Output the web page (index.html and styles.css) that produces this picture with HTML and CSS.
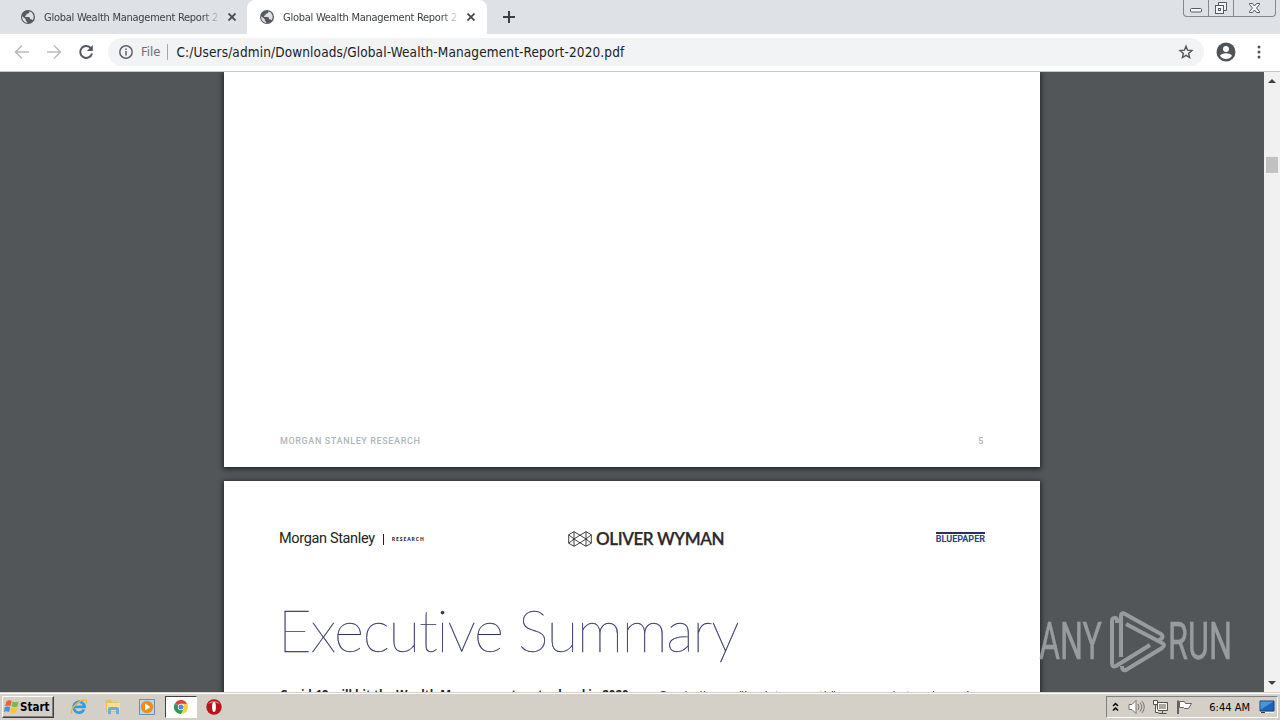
FILE: index.html
```html
<!DOCTYPE html>
<html lang="en">
<head>
  <meta charset="UTF-8">
  <title>Global Wealth Management Report 2020</title>
  <link rel="stylesheet" href="styles.css">
</head>
<body>
  <svg width="0" height="0" class="defs">
    <symbol id="globe" viewBox="0 0 14 14">
      <circle cx="7" cy="7" r="7" fill="#56595d"/>
      <path d="M1.2 6.2 4.8 9.2v1.4l1.5 1.6v.9A6 6 0 0 1 1.2 6.2zM8.4 1.3v1L7 3.7H5.6V5L4.2 5.7v1.4h4.2l.8 2.1h1.4l1 1.1A5.9 5.9 0 0 0 8.4 1.3z" fill="#dee1e6"/>
    </symbol>
  </svg>

  <!-- Tabs -->
  <div class="tabstrip">
    <div class="tab">
      <svg class="favicon"><use href="#globe"/></svg>
      <span class="tab-title">Global Wealth Management Report 2</span>
      <svg class="close" viewBox="0 0 8 8"><path d="M.5.5l7 7M7.5.5l-7 7"/></svg>
    </div>
    <div class="tab active">
      <svg class="favicon"><use href="#globe"/></svg>
      <span class="tab-title">Global Wealth Management Report 2</span>
      <svg class="close" viewBox="0 0 8 8"><path d="M.5.5l7 7M7.5.5l-7 7"/></svg>
    </div>
    <svg class="new-tab" viewBox="0 0 12 12"><path d="M6 0v12M0 6h12"/></svg>
    <div class="window-buttons">
      <svg width="25" height="16"><rect x="6.500" y="8.500" width="11" height="3.500" rx="1"/></svg>
      <svg width="25" height="16"><path d="M9.500 5V2.500h8v8H15"/><rect x="6.500" y="5.500" width="8" height="8"/><rect x="9.500" y="8.500" width="2" height="2"/></svg>
      <svg width="41" height="16"><path d="M15.500 3.500h3l2 2.500 2-2.500h3v1L22.500 8l3 3.500v1h-3l-2-2.500-2 2.500h-3v-1l3-3.500-3-3.500z"/></svg>
    </div>
  </div>

  <!-- Toolbar -->
  <div class="toolbar">
    <svg class="nav off" viewBox="0 0 16 16"><path d="M15 8H2M8 1.500 1.500 8 8 14.500"/></svg>
    <svg class="nav off" viewBox="0 0 16 16"><path d="M1 8h13M8 1.500 14.500 8 8 14.500"/></svg>
    <svg class="nav" viewBox="0 0 16 16"><path d="M13 4.300A6 6 0 1 0 14 9.500"/><path d="M14.800 1v6H8.800z" class="solid"/></svg>
    <div class="address">
      <svg class="info" viewBox="0 0 14 14"><circle cx="7" cy="7" r="6.200"/><path d="M7 6v4.500M7 3.500V5"/></svg>
      <span class="scheme">File</span>
      <span class="url">C:/Users/admin/Downloads/Global-Wealth-Management-Report-2020.pdf</span>
      <svg class="star" viewBox="0 0 16 16"><path d="M8 2.200l1.600 4 4.300.4-3.300 2.800 1 4.200L8 11.400l-3.600 2.200 1-4.200-3.300-2.800 4.300-.4z"/></svg>
    </div>
    <svg class="avatar" viewBox="0 0 20 20"><circle cx="10" cy="10" r="9.500" fill="#505357"/><circle cx="10" cy="7" r="3" fill="#fff"/><path d="M4 13.800C5.200 12 8 11.300 10 11.300s4.800.7 6 2.500A7.200 7.200 0 0 1 10 17a7.200 7.200 0 0 1-6-3.200z" fill="#fff"/></svg>
    <svg class="menu" viewBox="0 0 4 14"><circle cx="2" cy="2" r="1.500"/><circle cx="2" cy="7" r="1.500"/><circle cx="2" cy="12" r="1.500"/></svg>
  </div>

  <!-- PDF viewer -->
  <div class="viewer">
    <div class="pages">
      <div class="page page-5">
        <div class="page-footer">
          <span>MORGAN STANLEY RESEARCH</span>
          <span>5</span>
        </div>
      </div>
      <div class="page page-6">
        <div class="page-header">
          <div class="ms"><span class="ms-name">Morgan Stanley</span><span class="ms-bar"></span><span class="ms-research">RESEARCH</span></div>
          <div class="ow">
            <svg width="24" height="16" viewBox="0 0 24 16"><path d="M6 .7.7 3.800v8.400L6 15.300l6-3.500 6 3.500 5.300-3.100V3.800L18 .7l-6 3.500zM6 .7v14.600M18 .7v14.600M.7 3.800 6 8l6 3.800M12 4.200 6 8 .7 12.200M12 4.200 18 8l5.300 4.200M12 11.800 18 8l5.300-4.200"/></svg>
            <span>OLIVER WYMAN</span>
          </div>
          <div class="bluepaper">BLUEPAPER</div>
        </div>
        <h1>Executive Summary</h1>
        <p class="lead"><b>Covid-19 will hit the Wealth Management sector hard in 2020.</b> <span>Our bull case "back to growth" sees markets rebound</span></p>
      </div>
    </div>
    <div class="scrollbar">
      <span class="arrow up"></span>
      <span class="thumb"></span>
      <span class="arrow down"></span>
    </div>
    <svg class="watermark" width="200" height="70" viewBox="0 0 200 70">
      <text x="6" y="54" textLength="63" lengthAdjust="spacingAndGlyphs">ANY</text>
      <path d="M84 18v-3c0-3-5-3-5 1v42q0 5 4 3l34-21"/>
      <path d="M88 52V11q0-4 4-2l36 20q3 3 0 5l-3 2"/>
      <path d="M93 19l36 19q4 2 0 5L93 65q-4 1-4-4"/>
      <text x="135" y="54" textLength="64" lengthAdjust="spacingAndGlyphs">RUN</text>
    </svg>
  </div>

  <!-- Taskbar -->
  <div class="taskbar">
    <div class="start">
      <svg width="16" height="16" viewBox="0 0 16 16"><path d="M2.500 2.500Q5 .5 7.700 2L6.500 7Q4 5.700 1 7.200z" fill="#e8642a"/><path d="M8.700 2.500q2.600 1.600 6 0L13.500 7.500q-3 1.500-6 0z" fill="#7db843"/><path d="M.8 8.200q3-1.500 5.500 0L5 13q-2.500-1.600-5 0z" fill="#4b91d6"/><path d="M7.300 8.600q3 1.500 6 .2L12 13.500q-3 1.600-6 0z" fill="#f6c534"/></svg>
      <span>Start</span>
    </div>
    <div class="launch">
      <svg width="18" height="18" viewBox="0 0 18 18"><path d="M14 11.500A5.500 5.500 0 1 1 14.500 8.800H5" fill="none" stroke="#3a9bdc" stroke-width="2.800"/><path d="M2 15.500C-1 12 8 2 15 2c2 0 2 2 1 3.500" fill="none" stroke="#e6b93c" stroke-width="1.300"/></svg>
      <svg width="18" height="18" viewBox="0 0 18 18"><path d="M2 2h5l1 2h7v10H2z" fill="#e3c063"/><path d="M3 5h13v8H3z" fill="#f5e194"/><path d="M4 16v-5q0-2 2-2h7q2 0 2 2v5h-3v-4H7v4z" fill="#6aaedb"/></svg>
      <svg width="18" height="18" viewBox="0 0 18 18"><path d="M1.500 1.500h15v15h-15z" fill="#b8d8ef" stroke="#5f91bd"/><circle cx="9" cy="9" r="6.200" fill="#ef8b1d"/><path d="M7 5.500v7L12.500 9z" fill="#fff"/></svg>
    </div>
    <div class="task">
      <svg width="14" height="14" viewBox="0 0 14 14"><path d="M7 7 .9 3.500A7 7 0 0 1 13.100 3.500z" fill="#df4535"/><path d="M7 7 .9 3.500A7 7 0 0 0 7 14l3-5z" fill="#279b55"/><path d="M7 3.800h6.200A7 7 0 0 1 7 14l3-5z" fill="#f7ce3c"/><circle cx="7" cy="7" r="3.200" fill="#fff"/><circle cx="7" cy="7" r="2.500" fill="#4a87e8"/></svg>
    </div>
    <svg class="opera" width="16" height="16" viewBox="0 0 16 16"><circle cx="8" cy="8" r="7.700" fill="#b8141b"/><path d="M2 5a7 6 0 0 1 12 0q-6-3-12 0z" fill="#e0777a"/><ellipse cx="8" cy="8" rx="1.900" ry="5" fill="#fff"/></svg>
    <div class="tray">
      <svg width="7" height="10" viewBox="0 0 7 10"><path d="M1 4l2.500-2.500L6 4M1 8.500 3.500 6 6 8.500" stroke="#000" stroke-width="1.500" fill="none"/></svg>
      <svg class="speaker" width="17" height="16" viewBox="0 0 17 16"><path d="M1 5.500h3l4-4v13l-4-4H1z" fill="#fff" stroke="#77746e"/><path d="M10 5q2 3 0 6M12 3.500q3.500 4.500 0 9M14 2q4.500 6 0 12" stroke="#77746e" fill="none"/></svg>
      <svg class="network" width="17" height="16" viewBox="0 0 17 16"><path d="M5.500 3.500h10v8h-10z" fill="#aaa79f" stroke="#55534f"/><path d="M6.500 4.500h8v6h-8z" fill="none" stroke="#fff"/><path d="M6.500 14.500h8M10.500 12v2" stroke="#55534f"/><path d="M1.500 1.500h4v4h-4zM3.500 5.500v8h3" fill="#fff" stroke="#55534f"/></svg>
      <svg class="flag" width="17" height="16" viewBox="0 0 17 16"><path d="M2 1.500V15" stroke="#66635e" stroke-width="2"/><path d="M3.500 2.500h5l1 2h6l-3 5h-4l-1-1h-4z" fill="#fff" stroke="#66635e"/></svg>
      <span class="clock">6:44 AM</span>
      <svg class="desktop" width="16" height="14" viewBox="0 0 16 14"><path d="M1 1h14v10H1z" fill="#1e64b4" stroke="#183e78"/><path d="M1.500 1.500h13L4 8 1.500 10z" fill="#4c94da"/><path d="M1 12.500h14" stroke="#f4f4f4"/><path d="M2 12.500h4" stroke="#333"/></svg>
    </div>
  </div>
</body>
</html>
```

FILE: styles.css
```css
body {
  margin: 0;
  width: 1280px;
  height: 720px;
  overflow: hidden;
  display: flex;
  flex-direction: column;
  font-family: "DejaVu Sans Condensed", "DejaVu Sans", sans-serif;
}
svg {
  flex: none;
}
.defs {
  position: absolute;
}

/* tabs */
.tabstrip {
  height: 34px;
  flex: none;
  display: flex;
  background: #dee1e6;
}
.tab {
  box-sizing: border-box;
  width: 240px;
  height: 34px;
  padding: 0 11px 0 13px;
  margin-left: 8px;
  display: flex;
  align-items: center;
}
.tab + .tab {
  margin-left: -1px;
}
.tab.active {
  background: #fff;
  border-radius: 8px 8px 0 0;
}
.favicon {
  width: 14px;
  height: 14px;
}
.tab-title {
  width: 177px;
  margin-left: 9px;
  overflow: hidden;
  white-space: nowrap;
  font-size: 11px;
  letter-spacing: -0.26px;
  color: #3c4043;
  -webkit-mask-image: linear-gradient(to right, #000 158px, transparent 177px);
}
.close {
  width: 8px;
  height: 8px;
  margin-left: 7px;
  fill: none;
  stroke: #45484c;
  stroke-width: 1.8;
}
.new-tab {
  width: 12px;
  height: 12px;
  margin: 11px 0 0 16px;
  stroke: #3c4043;
  stroke-width: 2;
}
.window-buttons {
  display: flex;
  height: 16px;
  margin-left: auto;
  margin-right: 4px;
  border: 1px solid #85888f;
  border-top: 0;
  border-radius: 0 0 4px 4px;
}
.window-buttons svg {
  fill: #f4f5f7;
  stroke: #555a66;
}
.window-buttons svg + svg {
  box-shadow: -1px 0 #85888f;
}

/* toolbar */
.toolbar {
  box-sizing: border-box;
  height: 38px;
  flex: none;
  display: flex;
  align-items: center;
  padding: 0 19px 2px 14px;
  border-bottom: 1px solid #c4c6c8;
  background: #fff;
}
.nav {
  width: 16px;
  height: 16px;
  margin-right: 16px;
  fill: none;
  stroke: #54575b;
  stroke-width: 2;
}
.nav .solid {
  fill: #54575b;
  stroke: none;
}
.nav.off {
  stroke: #b9bbbe;
  stroke-width: 1.6;
}
.address {
  flex: 1;
  height: 28px;
  margin-left: -2px;
  padding: 0 10px 0 11px;
  display: flex;
  align-items: center;
  border-radius: 14px;
  background: #f1f3f4;
}
.info {
  width: 14px;
  height: 14px;
  fill: none;
  stroke: #5f6368;
  stroke-width: 1.5;
}
.scheme {
  margin-left: 8px;
  padding-right: 7px;
  border-right: 1px solid #a5a8ac;
  font-size: 13px;
  line-height: 16px;
  color: #6a6e73;
}
.url {
  margin-left: 8px;
  font-size: 13.5px;
  letter-spacing: 0.12px;
  color: #202124;
}
.star {
  width: 16px;
  height: 16px;
  margin-left: auto;
  fill: none;
  stroke: #54575b;
  stroke-width: 1.4;
}
.avatar {
  width: 20px;
  height: 20px;
  margin-left: 12px;
}
.menu {
  width: 4px;
  height: 14px;
  margin-left: 21px;
  fill: #505357;
}

/* viewer */
.viewer {
  position: relative;
  height: 620px;
  flex: none;
  display: flex;
  overflow: hidden;
  background: #525659;
}
.pages {
  width: 816px;
  margin-left: 224px;
}
.page {
  box-sizing: border-box;
  padding: 0 56px;
  background: #fff;
  box-shadow: 0 1px 5px 1px rgba(0, 0, 0, 0.6);
}
.page-5 {
  height: 395px;
  display: flex;
  align-items: flex-end;
}
.page-footer {
  flex: 1;
  display: flex;
  justify-content: space-between;
  padding-bottom: 19px;
  font-family: Roboto, sans-serif;
  font-size: 9px;
  font-weight: 500;
  line-height: 14px;
  letter-spacing: 0.62px;
  color: #adb7bb;
}
.page-6 {
  height: 700px;
  margin-top: 14px;
  padding-top: 48px;
}
.page-header {
  display: flex;
  align-items: center;
  justify-content: space-between;
  height: 20px;
}
.ms {
  display: flex;
  align-items: center;
  width: 289px;
  margin-left: -1px;
  font-family: "Open Sans", sans-serif;
  color: #222;
}
.ms-name {
  margin-top: -1px;
  font-family: Roboto, sans-serif;
  font-size: 14.5px;
  letter-spacing: -0.35px;
}
.ms-bar {
  width: 1px;
  height: 11px;
  margin: 1px 8px 0;
  background: #222;
}
.ms-research {
  font-size: 5px;
  font-weight: 700;
  letter-spacing: 0.95px;
}
.ow {
  display: flex;
  align-items: center;
  margin-top: -1px;
  margin-right: auto;
  font-family: Lato, sans-serif;
  font-size: 17px;
  font-weight: 600;
  letter-spacing: -0.4px;
  color: #2a2a2a;
  -webkit-text-stroke: 0.25px #2a2a2a;
}
.ow svg {
  margin-right: 4px;
  fill: none;
  stroke: #2a2a2a;
  stroke-width: 0.9;
}
.bluepaper {
  margin: -1px -1px 0 0;
  border-top: 2px solid #28305c;
  font-family: Roboto, sans-serif;
  font-size: 9px;
  font-weight: 700;
  line-height: 11px;
  color: #34437c;
}
h1 {
  margin: 43px 0 0 -2px;
  font-family: Lato, sans-serif;
  font-size: 58px;
  font-weight: 100;
  line-height: 76px;
  letter-spacing: -1.2px;
  white-space: nowrap;
  color: #2b3263;
  -webkit-text-stroke: 0.3px #2b3263;
}
.lead {
  margin: 19px 0 0;
  font-family: "Open Sans", sans-serif;
  font-size: 11.5px;
  line-height: 16px;
  white-space: nowrap;
  color: #222;
}
.lead span {
  margin-left: 24px;
  letter-spacing: 0.5px;
}
.scrollbar {
  width: 16px;
  margin-left: auto;
  display: flex;
  flex-direction: column;
  align-items: center;
  background: #f1f1f1;
}
.arrow {
  border: 4px solid transparent;
}
.arrow.up {
  margin-top: 3px;
  border-bottom-color: #404040;
}
.arrow.down {
  margin: auto 0 3px;
  border-top-color: #404040;
}
.thumb {
  width: 12px;
  height: 16px;
  margin-top: 74px;
  background: #c1c1c1;
}
.watermark {
  position: absolute;
  left: 1033px;
  top: 533px;
  opacity: 0.6;
}
.watermark text {
  font-family: Roboto, sans-serif;
  font-size: 52px;
  fill: #c8cbce;
  stroke: #c8cbce;
  stroke-width: 0.5;
}
.watermark path {
  fill: none;
  stroke: #c8cbce;
  stroke-width: 4;
}

/* taskbar */
.taskbar {
  box-sizing: border-box;
  height: 28px;
  flex: none;
  display: flex;
  align-items: center;
  padding: 1px 2px 0 2px;
  border-top: 1px solid #d4d0c8;
  box-shadow: inset 0 1px #fff;
  background: #d4d0c8;
}
.start {
  box-sizing: border-box;
  width: 52px;
  height: 22px;
  display: flex;
  align-items: center;
  padding-left: 1px;
  border: 1px solid;
  border-color: #fff #404040 #404040 #fff;
  box-shadow: inset -1px -1px #808080;
  font-size: 11.5px;
  font-weight: 700;
}
.launch {
  display: flex;
  gap: 16px;
  margin-left: 16px;
}
.task {
  box-sizing: border-box;
  width: 32px;
  height: 22px;
  margin-left: 9px;
  display: flex;
  align-items: center;
  justify-content: center;
  border: 1px solid;
  border-color: #404040 #fff #fff #404040;
  background: #fff;
}
.opera {
  margin-left: 9px;
}
.tray {
  box-sizing: border-box;
  width: 172px;
  height: 22px;
  margin-left: auto;
  padding: 0 2px 0 5px;
  display: flex;
  align-items: center;
  border: 1px solid;
  border-color: #808080 #fff #fff #808080;
  font-size: 11px;
}
.speaker {
  margin-left: 9px;
}
.network {
  margin-left: 7px;
}
.flag {
  margin-left: 7px;
}
.clock {
  margin-left: auto;
  margin-right: 9px;
}
```
